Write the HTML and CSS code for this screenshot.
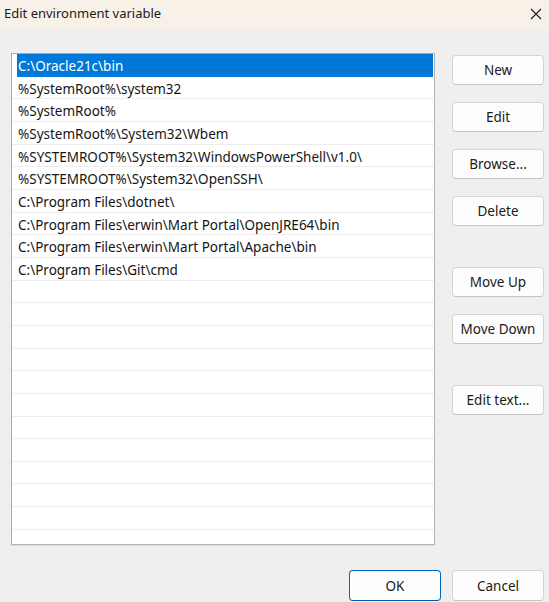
FILE: index.html
```html
<!DOCTYPE html>
<html>
<head>
<meta charset="utf-8">
<link rel="stylesheet" href="styles.css">
</head>
<body>
<div class="dialog">
  <div class="titlebar">
    <span class="title">Edit environment variable</span>
    <svg class="close" width="12" height="12" viewBox="0 0 12 12"><path d="M1 1 L11 11 M11 1 L1 11" stroke="#1b1b1b" stroke-width="1.1" fill="none"/></svg>
  </div>
  <div class="content">
    <div class="main">
      <div class="list">
        <div class="row selected"><span class="sel">C:\Oracle21c\bin</span></div>
        <div class="row"><span class="sel">%SystemRoot%\system32</span></div>
        <div class="row"><span class="sel">%SystemRoot%</span></div>
        <div class="row"><span class="sel">%SystemRoot%\System32\Wbem</span></div>
        <div class="row"><span class="sel">%SYSTEMROOT%\System32\WindowsPowerShell\v1.0\</span></div>
        <div class="row"><span class="sel">%SYSTEMROOT%\System32\OpenSSH\</span></div>
        <div class="row"><span class="sel">C:\Program Files\dotnet\</span></div>
        <div class="row"><span class="sel">C:\Program Files\erwin\Mart Portal\OpenJRE64\bin</span></div>
        <div class="row"><span class="sel">C:\Program Files\erwin\Mart Portal\Apache\bin</span></div>
        <div class="row"><span class="sel">C:\Program Files\Git\cmd</span></div>
        <div class="row"><span class="sel"></span></div>
        <div class="row"><span class="sel"></span></div>
        <div class="row"><span class="sel"></span></div>
        <div class="row"><span class="sel"></span></div>
        <div class="row"><span class="sel"></span></div>
        <div class="row"><span class="sel"></span></div>
        <div class="row"><span class="sel"></span></div>
        <div class="row"><span class="sel"></span></div>
        <div class="row"><span class="sel"></span></div>
        <div class="row"><span class="sel"></span></div>
        <div class="row"><span class="sel"></span></div>
        <div class="row"><span class="sel"></span></div>
      </div>
      <div class="side">
        <button class="btn">New</button>
        <button class="btn">Edit</button>
        <button class="btn">Browse...</button>
        <button class="btn">Delete</button>
        <button class="btn group">Move Up</button>
        <button class="btn">Move Down</button>
        <button class="btn group">Edit text...</button>
      </div>
    </div>
    <div class="footer">
      <button class="btn primary">OK</button>
      <button class="btn">Cancel</button>
    </div>
  </div>
</div>
</body>
</html>
```
FILE: styles.css
```css
html, body {
  margin: 0;
  padding: 0;
}
body {
  width: 549px;
  height: 602px;
  overflow: hidden;
  background: #efefef;
  font-family: "Noto Sans", "Open Sans", sans-serif;
  color: #1a1a1a;
}
.dialog {
  display: flex;
  flex-direction: column;
  height: 602px;
}
.titlebar {
  height: 29px;
  background: #f8f1e8;
  display: flex;
  align-items: center;
  justify-content: space-between;
  padding: 0 4px 4px 4px;
  box-sizing: border-box;
}
.title {
  font-size: 13px;
  color: #1a1a1a;
}
.close {
  margin-right: 3px;
  margin-top: 2px;
}
.content {
  padding: 24px 5px 0 11px;
  display: flex;
  flex-direction: column;
}
.main {
  display: flex;
  gap: 17px;
}
.list {
  width: 424px;
  height: 492px;
  box-sizing: border-box;
  border: 1px solid #a9a9a9;
  border-right-color: #b5b5b5;
  border-bottom-color: #b5b5b5;
  background: #ffffff;
  overflow: hidden;
  box-shadow: 0 1px 0 #dcdcdc;
}
.row {
  height: 22.67px;
  box-sizing: border-box;
  border-bottom: 1px solid #ededed;
  display: flex;
}
.sel {
  flex: 1;
  margin: 0 1px 0 5px;
  padding: 3px 0 0 1px;
  font-size: 13.5px;
  line-height: 19px;
  white-space: nowrap;
  overflow: hidden;
  color: #151515;
}
.row.selected {
  border-bottom-color: transparent;
}
.row.selected .sel {
  background: #0078d7;
  color: #ffffff;
  margin-bottom: -1px;
}
.side {
  width: 92px;
  display: flex;
  flex-direction: column;
  gap: 17px;
  padding-top: 2px;
}
.btn {
  width: 92px;
  height: 30px;
  box-sizing: border-box;
  background: #fdfdfd;
  border: 1px solid #d5d5d5;
  border-bottom-color: #c4c4c4;
  border-radius: 4px;
  font-family: "Noto Sans", "Open Sans", sans-serif;
  font-size: 13.5px;
  color: #1a1a1a;
  padding: 0;
}
.side .group {
  margin-top: 24px;
}
.footer {
  display: flex;
  justify-content: flex-end;
  gap: 11px;
  margin-top: 25px;
}
.footer .btn {
  height: 31px;
}
.btn.primary {
  border: 1px solid #0067c0;
  border-bottom-color: #005ba8;
}
```
